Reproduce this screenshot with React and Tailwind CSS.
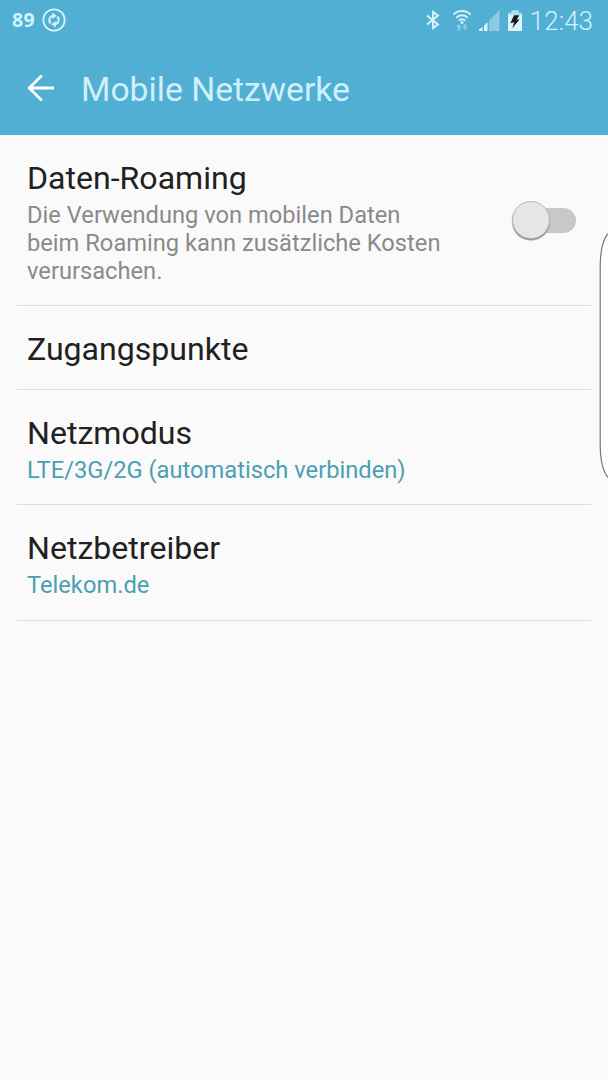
import React from 'react';

const items = [
    {
        title: 'Daten-Roaming',
        text: 'Die Verwendung von mobilen Daten beim Roaming kann zusätzliche Kosten verursachen.',
        textClass: 'text-[#8a8a8a]',
        toggle: true,
    },
    { title: 'Zugangspunkte' },
    { title: 'Netzmodus', text: 'LTE/3G/2G (automatisch verbinden)', textClass: 'text-[#4c9fb3]' },
    { title: 'Netzbetreiber', text: 'Telekom.de', textClass: 'text-[#4c9fb3]' },
];

const SyncIcon = () => (
    <svg className="w-6 h-6" viewBox="0 0 24 24" fill="none" stroke="currentColor">
        <circle cx="12" cy="12" r="10.7" strokeWidth="1.8" />
        <path d="M8.6 15.4c-2.4-2.6-1.4-6.8 2.2-7.6M15.4 8.6c2.4 2.6 1.4 6.8-2.2 7.6" strokeWidth="2.2" />
        <path d="M10.2 4.4l4.6 3.4-4.6 3.2zM13.8 13v6.6l-4.6-3.4z" fill="currentColor" stroke="none" />
    </svg>
);

const BluetoothIcon = () => (
    <svg className="w-[14px] h-[20px]" viewBox="0 0 14 20" fill="none" stroke="currentColor" strokeWidth="2">
        <path d="M1 5.4l11 9L7 18V2l5 3.6-11 9" />
    </svg>
);

const WifiIcon = () => (
    <svg className="w-[20px] h-[22px]" viewBox="0 0 20 22" fill="none" stroke="currentColor" strokeWidth="2">
        <path d="M1.4 5.6a12.2 12.2 0 0 1 17.2 0M4.2 8.7a8.2 8.2 0 0 1 11.6 0M6.8 11.6a4.5 4.5 0 0 1 6.4 0" />
        <circle cx="10" cy="13.6" r="1.5" fill="currentColor" stroke="none" />
        <path d="M4.2 18L7 15l2.6 3H8.3v3.500H5.700V18zM10.400 18.500h1.300v-3.500h2.600v3.500h1.300L13 21.500z" fill="#86cde5" stroke="none" />
    </svg>
);

const SignalIcon = () => (
    <svg className="w-[21px] h-[21px]" viewBox="0 0 21 21">
        <path d="M0 21v-1.500L3.500 17v4zM5 21v-5.400l3.500-3.400V21z" fill="#dff6fd" />
        <path d="M10 21V10.700l3.600-3.600V21zM13.600 21V7.100L20.500 0v21z" fill="#8bcce4" />
    </svg>
);

const BatteryIcon = () => (
    <svg className="w-[14px] h-[21px]" viewBox="0 0 14 21">
        <path d="M0 3h3.6V.6h6.8V3H14v18H0z" fill="#d9f3f8" />
        <path d="M0 3h3.6V.6h6.8V3H14v2H0z" fill="#acdff0" />
        <path d="M6 5.2h5.4L8.7 9.7l3-.5-7.4 9 1.9-5.9-3.8.9z" fill="#101c20" />
    </svg>
);

const StatusBar = () => (
    <div className="flex h-10 items-center justify-between pl-3 pr-[15px] text-[#d3f3fc]">
        <div className="flex items-center gap-[7px]">
            <span className="font-['Open_Sans'] text-[19.5px] font-bold leading-none tracking-[0.3px]">89</span>
            <SyncIcon />
        </div>
        <div className="flex items-center">
            <BluetoothIcon />
            <div className="ml-[12px]"><WifiIcon /></div>
            <div className="ml-[7px]"><SignalIcon /></div>
            <div className="ml-[8px]"><BatteryIcon /></div>
            <span className="ml-[8px] mt-[2px] text-[26px] font-light leading-none">12:43</span>
        </div>
    </div>
);

const Toggle = () => (
    <div className="-mt-1 flex h-10 w-16 items-center">
        <div className="z-10 h-[38px] w-[38px] shrink-0 rounded-full border border-[#b5b5b5] bg-[#e6e6e6] shadow-[0_1.5px_1px_#8f8f8f]" />
        <div className="-ml-5 h-[25px] w-[46px] shrink-0 rounded-full bg-[#c8c8c8]" />
    </div>
);

const App = () => {
    return (
        <div className="relative h-[1080px] w-[608px] overflow-hidden bg-[#fafafa] font-[Roboto,sans-serif]">
            <header className="h-[135px] bg-[#50afd3]">
                <StatusBar />
                <div className="flex h-[95px] items-center pl-[27px]">
                    <svg className="w-[27px] h-[28px]" viewBox="0 0 27 28" fill="none" stroke="#fff" strokeWidth="2.8">
                        <path d="M27 14H2M14.8 1.6L2.2 14l12.6 12.4" />
                    </svg>
                    <h1 className="ml-[27px] mt-[4px] text-[33.7px] leading-none text-[#d0effb]">Mobile Netzwerke</h1>
                </div>
            </header>

            <main className="px-[17px]">
                {items.map((item) => (
                    <div key={item.title} className="flex items-center justify-between border-b border-[#dfdfdf] pb-5 pl-[10px] pr-[15px] pt-6 last:pb-[21px]">
                        <div className="w-[420px]">
                            <h2 className="text-[32.1px] leading-[38px] text-[#212121]">{item.title}</h2>
                            {item.text ? (
                                <p className={`mt-1 text-[23.7px] leading-7 ${item.textClass}`}>{item.text}</p>
                            ) : (
                                <div className="h-px" />
                            )}
                        </div>
                        {item.toggle && <Toggle />}
                    </div>
                ))}
            </main>

            {/* edge panel handle, runs off the right side */}
            <svg className="absolute right-0 top-[230px] h-[250px] w-[9px]" viewBox="0 0 9 250">
                <path d="M9 3.5C3.5 10 1.2 21 1.2 38v175c0 17 2.3 28 7.8 34.5" fill="#fff" stroke="#777" strokeWidth="1.2" />
            </svg>
        </div>
    );
};

export default App;
